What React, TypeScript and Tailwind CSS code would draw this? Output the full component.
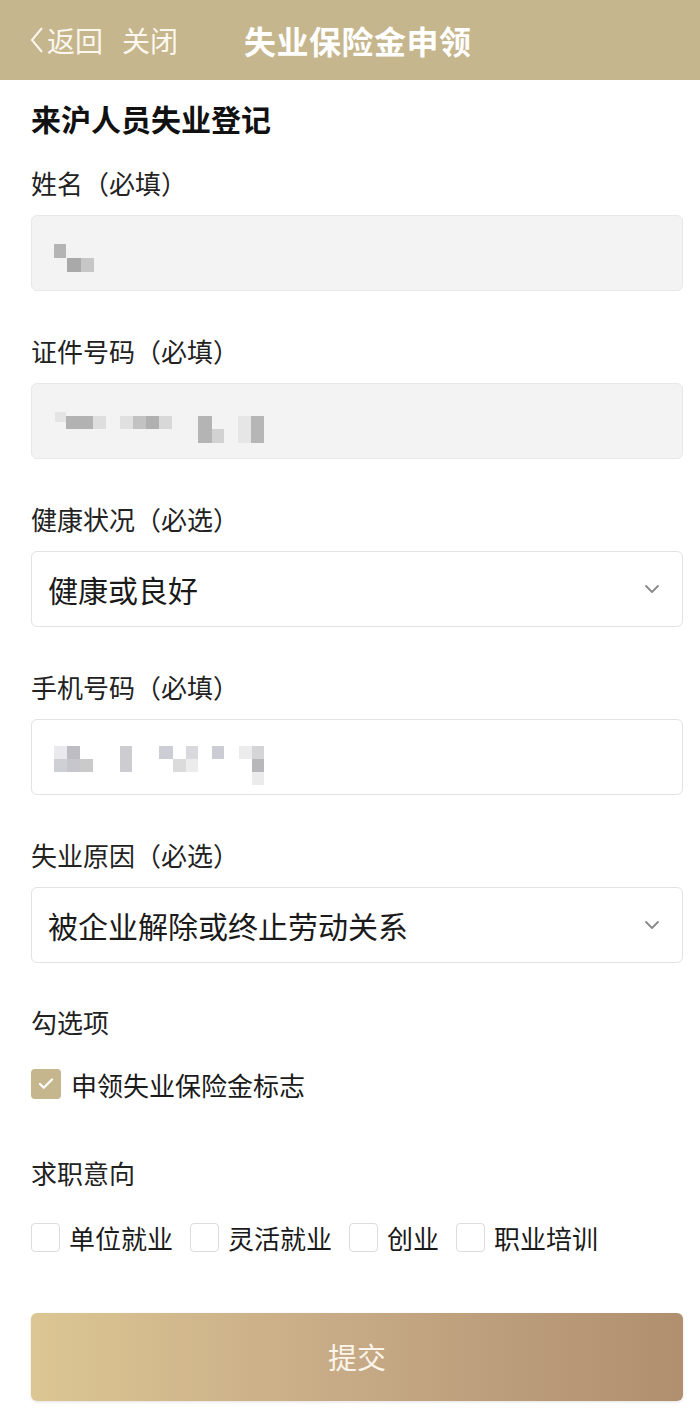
import { ChevronDown, Check } from 'lucide-react';

type Cell = [number, number, number, number, string];

// pixelated (masked) values, coordinates relative to the input's left/top
const nameCells: Cell[] = [
  [22, 28, 12, 14, '#b4b4b4'],
  [35, 42, 14, 14, '#a9a9a9'],
  [49, 42, 13, 14, '#c6c6c6'],
];

const idCells: Cell[] = [
  [23, 28, 11, 10, '#e4e4e4'],
  [34, 32, 27, 13, '#b2b2b2'],
  [61, 32, 13, 13, '#dedede'],
  [88, 32, 13, 13, '#e0e0e0'],
  [101, 32, 13, 13, '#c2c2c2'],
  [114, 32, 13, 13, '#b0b0b0'],
  [127, 32, 13, 13, '#d8d8d8'],
  [166, 32, 14, 27, '#b4b4b4'],
  [180, 45, 12, 14, '#d2d2d2'],
  [206, 32, 13, 27, '#e6e6e6'],
  [219, 32, 13, 27, '#b6b6b6'],
];

const phoneCells: Cell[] = [
  [22, 26, 13, 13, '#eaeaee'],
  [35, 26, 13, 13, '#bdbdc3'],
  [22, 39, 13, 13, '#cfcfd6'],
  [35, 39, 13, 13, '#c6c6cc'],
  [48, 39, 13, 13, '#cacaca'],
  [88, 26, 12, 26, '#cdcdd1'],
  [127, 26, 14, 13, '#cdcdd5'],
  [141, 39, 13, 13, '#dbdbdb'],
  [154, 26, 12, 13, '#d9d9dd'],
  [154, 39, 12, 13, '#ececec'],
  [180, 26, 12, 13, '#ccccd4'],
  [207, 26, 13, 13, '#ececec'],
  [220, 26, 12, 13, '#d5d5d8'],
  [220, 39, 12, 13, '#b8b8bb'],
  [220, 52, 12, 13, '#ebebeb'],
];

function Mosaic({ cells }: { cells: Cell[] }) {
  return (
    <svg className="absolute left-0 top-0" width="300" height="76" viewBox="0 0 300 76">
      {cells.map(([x, y, w, h, c], i) => (
        <rect key={i} x={x} y={y} width={w} height={h} fill={c} />
      ))}
    </svg>
  );
}

function Label({ children, className = '' }: { children: React.ReactNode; className?: string }) {
  return <div className={`h-[34px] text-[26px] leading-[34px] text-[#222] ${className}`}>{children}</div>;
}

function Box({ checked = false }: { checked?: boolean }) {
  if (checked) {
    return (
      <span className="flex h-[30px] w-[30px] shrink-0 items-center justify-center rounded-[4px] bg-[#c6b68d]">
        <Check className="h-[18px] w-[18px] text-white" strokeWidth={3} />
      </span>
    );
  }
  return <span className="block h-[29px] w-[29px] shrink-0 rounded-[4px] border border-[#dcdcdc] bg-white" />;
}

function Option({ text, first = false }: { text: string; first?: boolean }) {
  return (
    <div className={`flex items-center ${first ? '' : 'ml-[17px]'}`}>
      <Box />
      <span className="ml-[9px]">{text}</span>
    </div>
  );
}

export default function App() {
  const font = { fontFamily: '"Noto Sans CJK SC", "Noto Sans", sans-serif' };

  return (
    <div className="min-h-[1411px] w-[700px] bg-white" style={font}>
      {/* header */}
      <div className="flex h-[80px] items-center bg-[#c6b68d] pl-[29px] text-white">
        <div className="flex items-center text-[28px] leading-none text-[#fbf7ee]">
          <svg width="16" height="30" viewBox="0 0 16 30" className="mr-[2px]">
            <path d="M13 3 L3 15 L13 27" fill="none" stroke="#fbf7ee" strokeWidth="2" />
          </svg>
          <span>返回</span>
          <span className="ml-[19px]">关闭</span>
        </div>
        <div className="ml-[66px] text-[32px] font-bold tracking-[0.5px]">失业保险金申领</div>
      </div>

      <div className="pb-[10px] pl-[31px] pr-[17px] pt-[18px]">
        <div className="h-[40px] text-[30px] font-bold leading-[40px] text-[#111]">来沪人员失业登记</div>

        <Label className="mt-[28px]">姓名（必填）</Label>
        <div className="relative mt-[15px] h-[76px] rounded-[6px] border border-[#e8e8e8] bg-[#f3f3f3]">
          <Mosaic cells={nameCells} />
        </div>

        <Label className="mt-[43px]">证件号码（必填）</Label>
        <div className="relative mt-[15px] h-[76px] rounded-[6px] border border-[#e8e8e8] bg-[#f3f3f3]">
          <Mosaic cells={idCells} />
        </div>

        <Label className="mt-[43px]">健康状况（必选）</Label>
        <div className="mt-[15px] flex h-[76px] items-center justify-between rounded-[6px] border border-[#e3e3e3] bg-white pl-[16px] pr-[18px]">
          <span className="text-[30px] text-[#1a1a1a]">健康或良好</span>
          <ChevronDown className="h-[24px] w-[24px] text-[#8a8a8a]" strokeWidth={1.8} />
        </div>

        <Label className="mt-[43px]">手机号码（必填）</Label>
        <div className="relative mt-[15px] h-[76px] rounded-[6px] border border-[#e3e3e3] bg-white">
          <Mosaic cells={phoneCells} />
        </div>

        <Label className="mt-[43px]">失业原因（必选）</Label>
        <div className="mt-[15px] flex h-[76px] items-center justify-between rounded-[6px] border border-[#e3e3e3] bg-white pl-[16px] pr-[18px]">
          <span className="text-[30px] text-[#1a1a1a]">被企业解除或终止劳动关系</span>
          <ChevronDown className="h-[24px] w-[24px] text-[#8a8a8a]" strokeWidth={1.8} />
        </div>

        <Label className="mt-[42px]">勾选项</Label>
        <div className="mt-[25px] flex h-[40px] items-center">
          <Box checked />
          <span className="ml-[10px] text-[26px] text-[#1a1a1a]">申领失业保险金标志</span>
        </div>

        <Label className="mt-[52px]">求职意向</Label>
        <div className="mt-[27px] flex h-[40px] items-center text-[26px] text-[#1a1a1a]">
          <Option text="单位就业" first />
          <Option text="灵活就业" />
          <Option text="创业" />
          <Option text="职业培训" />
        </div>

        <button className="mt-[56px] flex h-[88px] w-full items-center justify-center rounded-[6px] bg-gradient-to-r from-[#dcc693] via-[#c6a985] to-[#b08f6f] text-[29px] text-[#fbf5ea] shadow-[0_1px_3px_rgba(0,0,0,0.12)]">
          提交
        </button>
      </div>
    </div>
  );
}
